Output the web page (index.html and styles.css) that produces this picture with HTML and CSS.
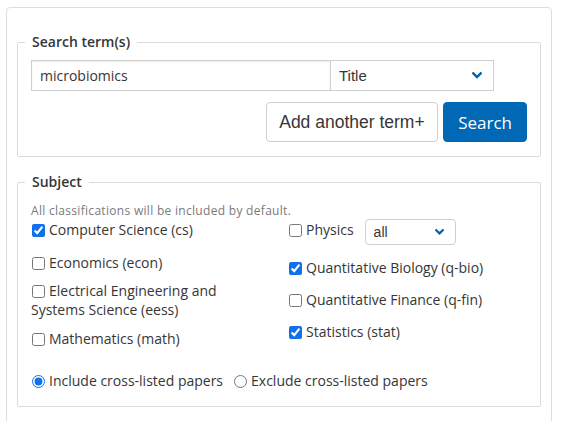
FILE: index.html
```html
<!DOCTYPE html>
<html lang="en">
<head>
<meta charset="utf-8">
<title>Advanced Search</title>
<link rel="stylesheet" href="styles.css">
</head>
<body>
<div class="page">
<div class="panel">
  <fieldset class="box terms">
    <legend>Search term(s)</legend>
    <div class="term-row">
      <input class="term-input" type="text" value="microbiomics">
      <div class="select title-select">
        <span>Title</span>
        <svg class="chev" width="10" height="7" viewBox="0 0 10 7"><path d="M1.3 1.3 L5 5 L8.7 1.3" fill="none" stroke="#0064ad" stroke-width="2.4" stroke-linecap="square"/></svg>
      </div>
    </div>
    <div class="actions">
      <button class="btn add" type="button">Add another term+</button>
      <button class="btn search" type="button">Search</button>
    </div>
  </fieldset>

  <fieldset class="box subject">
    <legend>Subject</legend>
    <p class="help">All classifications will be included by default.</p>
    <div class="cols">
      <div class="col left">
        <label class="check cs"><input type="checkbox" checked>Computer Science (cs)</label>
        <label class="check econ"><input type="checkbox">Economics (econ)</label>
        <label class="check eess"><input type="checkbox">Electrical Engineering and Systems Science (eess)</label>
        <label class="check math"><input type="checkbox">Mathematics (math)</label>
      </div>
      <div class="col right">
        <div class="physics">
          <label class="check"><input type="checkbox">Physics</label>
          <div class="select small-select">
            <span>all</span>
            <svg class="chev" width="9" height="6" viewBox="0 0 9 6"><path d="M1.2 1.2 L4.5 4.4 L7.8 1.2" fill="none" stroke="#0064ad" stroke-width="2.2" stroke-linecap="square"/></svg>
          </div>
        </div>
        <label class="check qbio"><input type="checkbox" checked>Quantitative Biology (q-bio)</label>
        <label class="check qfin"><input type="checkbox">Quantitative Finance (q-fin)</label>
        <label class="check stat"><input type="checkbox" checked>Statistics (stat)</label>
      </div>
    </div>
    <div class="radios">
      <label class="radio include"><input type="radio" name="cross" checked>Include cross-listed papers</label>
      <label class="radio"><input type="radio" name="cross">Exclude cross-listed papers</label>
    </div>
  </fieldset>
</div>
</div>
</body>
</html>
```

FILE: styles.css
```css
* { box-sizing: border-box; }

html, body {
  margin: 0;
  background: #fff;
}

body {
  font-family: "Open Sans", "DejaVu Sans", sans-serif;
  color: #363636;
}

.page {
  height: 421px;
  overflow: hidden;
  padding: 7px 0 0 6px;
}

.panel {
  width: 546px;
  height: 440px;
  border: 1px solid #dedede;
  border-radius: 4px;
  padding: 24px 10px 0;
}

.box {
  margin: 0;
  min-width: 0;
  border: 1px solid #dbdbdb;
  border-radius: 2px;
  padding: 8px 13px 14px;
}

.box legend {
  margin-left: -6px;
  padding: 0 7px;
  font-size: 14px;
  line-height: 20px;
  font-weight: 600;
  color: #363636;
}

.term-row {
  display: flex;
}

.term-input {
  width: 300px;
  height: 31px;
  margin: 0;
  border: 1px solid #cfcfcf;
  border-radius: 0;
  padding: 0 8px;
  font-family: "Open Sans", sans-serif;
  font-size: 14px;
  color: #363636;
  box-shadow: inset 0 1px 2px rgba(10, 10, 10, 0.08);
  outline: none;
}

.select {
  display: flex;
  align-items: center;
  justify-content: space-between;
  background: #fff;
  border: 1px solid #cfcfcf;
  font-family: "Liberation Sans", Arial, sans-serif;
  color: #363636;
}

.title-select {
  width: 164px;
  height: 31px;
  margin-left: -1px;
  padding: 0 11px 0 8px;
  font-size: 15px;
}

.chev { display: block; }

.actions {
  display: flex;
  justify-content: flex-end;
  gap: 5px;
  margin-top: 11px;
}

.btn {
  height: 40px;
  margin: 0;
  border-radius: 4px;
  cursor: pointer;
}

.add {
  padding: 0 12.5px;
  border: 1px solid #d0d0d0;
  background: #fff;
  color: #363636;
  font-family: "Liberation Sans", Arial, sans-serif;
  font-size: 17.5px;
}

.search {
  padding: 0 14px;
  border: 1px solid #0068b4;
  background: #0068b4;
  color: #fff;
  font-family: "Open Sans", sans-serif;
  font-size: 17px;
}

.subject {
  margin-top: 15px;
  padding: 11px 13px 16px;
}

.help {
  margin: 0;
  font-size: 12px;
  line-height: 16px;
  letter-spacing: 0.3px;
  color: #7a7a7a;
}

.cols {
  display: grid;
  grid-template-columns: 230px 1fr;
  column-gap: 27px;
}

.col {
  display: flex;
  flex-direction: column;
  align-items: flex-start;
}

.check, .radio {
  display: block;
  font-size: 14px;
  line-height: 19px;
  color: #363636;
}

.check input, .radio input {
  width: 13px;
  height: 13px;
  margin: 0 4px 0 1px;
  vertical-align: -2px;
  accent-color: #1170ec;
}

.left .cs { margin-top: 1px; }
.left .econ { margin-top: 14px; }
.left .eess { margin-top: 9px; }
.left .math { margin-top: 10px; }

.physics {
  display: flex;
  align-items: flex-start;
}

.physics .check { margin-top: 1px; }

.small-select {
  width: 91px;
  height: 26px;
  margin-left: 11px;
  padding: 0 11px 0 8px;
  border-radius: 4px;
  font-size: 14px;
}

.right .qbio { margin-top: 13px; }
.right .qfin { margin-top: 12.5px; }
.right .stat { margin-top: 13px; }

.radios {
  display: flex;
  margin-top: 23px;
}

.radio.include { margin-right: 10px; }
```
